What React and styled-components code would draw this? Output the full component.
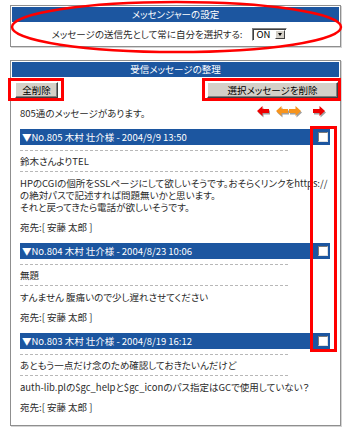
import React from 'react'
import styled, { createGlobalStyle } from 'styled-components'

// Data
const messages = [
  {
    no: 805,
    from: '木村 壮介様',
    date: '2004/9/9 13:50',
    subject: '鈴木さんよりTEL',
    body: [
      'HPのCGIの個所をSSLページにして欲しいそうです。おそらくリンクをhttps://',
      'の絶対パスで記述すれば問題無いかと思います。',
      'それと戻ってきたら電話が欲しいそうです。',
    ],
  },
  {
    no: 804,
    from: '木村 壮介様',
    date: '2004/8/23 10:06',
    subject: '無題',
    body: ['すんません 腹痛いので少し遅れさせてください'],
  },
  {
    no: 803,
    from: '木村 壮介様',
    date: '2004/8/19 16:12',
    subject: 'あともう一点だけ念のため確認しておきたいんだけど',
    body: ['auth-lib.plの$gc_helpと$gc_iconのパス指定はGCで使用していない？'],
  },
]

const BLUE = '#1c56a0'

const GlobalStyle = createGlobalStyle`
  html, body { margin: 0; padding: 0; background: #fff; }
  body {
    font-family: "Noto Sans CJK JP", "Noto Sans", sans-serif;
    font-size: 9.5px;
    color: #2a2a2a;
    font-feature-settings: "palt" 1;
  }
`

const Page = styled.div`
  position: relative;
  width: 350px;
  height: 438px;
  padding-top: 5px;
  box-sizing: border-box;
  overflow: hidden;
`

const Panel = styled.section`
  margin: 0 0 ${p => p.$gap || 0}px 10px;
  width: 331px;
  box-sizing: border-box;
  border: 1px solid #8f8f8f;
  box-shadow: 1px 1px 0 #d4d4d4;
  padding: 1px 1px ${p => p.$pb || 0}px;
`

const PanelTitle = styled.div`
  height: 15px;
  line-height: 15px;
  background: ${BLUE};
  color: #fff;
  text-align: center;
`

const SettingRow = styled.div`
  height: 24px;
  display: flex;
  align-items: center;
  justify-content: center;
  gap: 10px;
  padding-right: 12px;
`

const Select = styled.span`
  display: inline-flex;
  align-items: center;
  justify-content: space-between;
  width: 35px;
  height: 13px;
  box-sizing: border-box;
  border: 1px solid;
  border-color: #808080 #fff #fff #808080;
  box-shadow: inset 1px 1px 0 #404040;
  background: #fff;
  padding: 1px 1px 1px 3px;
  font-size: 9.5px;
  line-height: 10px;
  color: #000;
`

const SelectButton = styled.span`
  width: 10px;
  height: 9px;
  background: #d4d0c8;
  border: 1px solid;
  border-color: #fff #404040 #404040 #fff;
  box-sizing: border-box;
  display: flex;
  align-items: center;
  justify-content: center;
  &::after {
    content: '';
    border-left: 2.5px solid transparent;
    border-right: 2.5px solid transparent;
    border-top: 3px solid #000;
  }
`

const ButtonRow = styled.div`
  display: flex;
  justify-content: space-between;
  padding: 5px 1px 3px 3px;
`

const Button = styled.button`
  width: ${p => p.$w}px;
  height: 16px;
  padding: 0;
  margin: 0;
  font-family: inherit;
  font-size: 9.5px;
  font-feature-settings: "palt" 1;
  line-height: 12px;
  color: #000;
  background: #d4d0c8;
  border: 1px solid;
  border-color: #fff #404040 #404040 #fff;
  box-shadow: inset -1px -1px 0 #808080;
`

const InfoRow = styled.div`
  height: 24px;
  display: flex;
  align-items: center;
  justify-content: space-between;
  padding: 0 13px 0 8px;
`

const Arrows = styled.div`
  display: flex;
  align-items: center;
  flex-shrink: 0;
  padding-bottom: 2px;
`

const ArrowIcon = styled.svg`
  display: block;
  flex-shrink: 0;
  width: 13px;
  height: 12px;
  margin-left: ${p => p.$gap}px;
`

const MessageList = styled.div`
  margin-top: 4px;
  padding: 0 9px 2px 8px;
`

const Message = styled.article`
  margin-bottom: 10px;
`

const MsgHead = styled.div`
  height: 16px;
  display: flex;
  align-items: center;
  justify-content: space-between;
  padding: 0 2px;
  background: ${BLUE};
  color: #fff;
  white-space: nowrap;
`

const CheckBox = styled.span`
  width: 10px;
  height: 10px;
  box-sizing: border-box;
  background: #fff;
  border: 1px solid;
  border-color: #7a7a7a #e0e0e0 #e0e0e0 #7a7a7a;
`

const Dashed = styled.div`
  width: 268px;
  height: 1px;
  margin-top: ${p => p.$mt || 0}px;
  background: repeating-linear-gradient(to right, #b8b8b8 0 3px, transparent 3px 5px);
`

const Subject = styled.div`
  padding: 4px 0;
  line-height: 12px;
  white-space: nowrap;
`

const Body = styled.div`
  padding-top: 5px;
  line-height: 12px;
  white-space: nowrap;
`

const Recipient = styled.div`
  margin-top: 8px;
  line-height: 12px;
`

const Ring = styled.svg`
  position: absolute;
  left: 0;
  top: 0;
  pointer-events: none;
`

const RedBox = styled.div`
  position: absolute;
  left: ${p => p.$x}px;
  top: ${p => p.$y}px;
  width: ${p => p.$w}px;
  height: ${p => p.$h}px;
  box-sizing: border-box;
  border: 3px solid #f00;
  pointer-events: none;
`

const Arrow = ({ dir, color, gap }) => {
  const pts = dir === 'left'
    ? '0,5 5.5,0 5.5,3 12,3 12,7 5.5,7 5.5,10'
    : '12,5 6.5,0 6.5,3 0,3 0,7 6.5,7 6.5,10'
  return (
    <ArrowIcon $gap={gap} viewBox="0 0 13 12">
      <polygon points={pts} fill="#a0a0a0" transform="translate(1 1.5)" />
      <polygon points={pts} fill={color} />
    </ArrowIcon>
  )
}

const App = () => (
  <Page>
    <GlobalStyle />
    <Panel $gap={13}>
      <PanelTitle>メッセンジャーの設定</PanelTitle>
      <SettingRow>
        <span>メッセージの送信先として常に自分を選択する:</span>
        <Select>ON<SelectButton /></Select>
      </SettingRow>
    </Panel>

    <Panel>
      <PanelTitle>受信メッセージの整理</PanelTitle>
      <ButtonRow>
        <Button $w={43}>全削除</Button>
        <Button $w={131}>選択メッセージを削除</Button>
      </ButtonRow>
      <InfoRow>
        <span>805通のメッセージがあります。</span>
        <Arrows>
          <Arrow dir="left" color="#ee0000" gap={0} />
          <Arrow dir="left" color="#f7941d" gap={6} />
          <Arrow dir="right" color="#f7941d" gap={0} />
          <Arrow dir="right" color="#ee0000" gap={11} />
        </Arrows>
      </InfoRow>
      <MessageList>
        {messages.map(m => (
          <Message key={m.no}>
            <MsgHead>
              <span>▼No.{m.no} {m.from} - {m.date}</span>
              <CheckBox />
            </MsgHead>
            <Dashed $mt={5} />
            <Subject>{m.subject}</Subject>
            <Dashed />
            <Body>
              {m.body.map((line, i) => <div key={i}>{line}</div>)}
            </Body>
            <Recipient>宛先:[ 安藤 太郎 ]</Recipient>
          </Message>
        ))}
      </MessageList>
    </Panel>

    <Ring width="350" height="60" viewBox="0 0 350 60">
      <ellipse cx="176.5" cy="27" rx="164.5" ry="25" fill="none" stroke="#f00" strokeWidth="2.5" />
    </Ring>
    <RedBox $x={8} $y={78} $w={56} $h={23} />
    <RedBox $x={202} $y={78} $w={139} $h={23} />
    <RedBox $x={310} $y={126} $w={27} $h={226} />
  </Page>
)

export default App
